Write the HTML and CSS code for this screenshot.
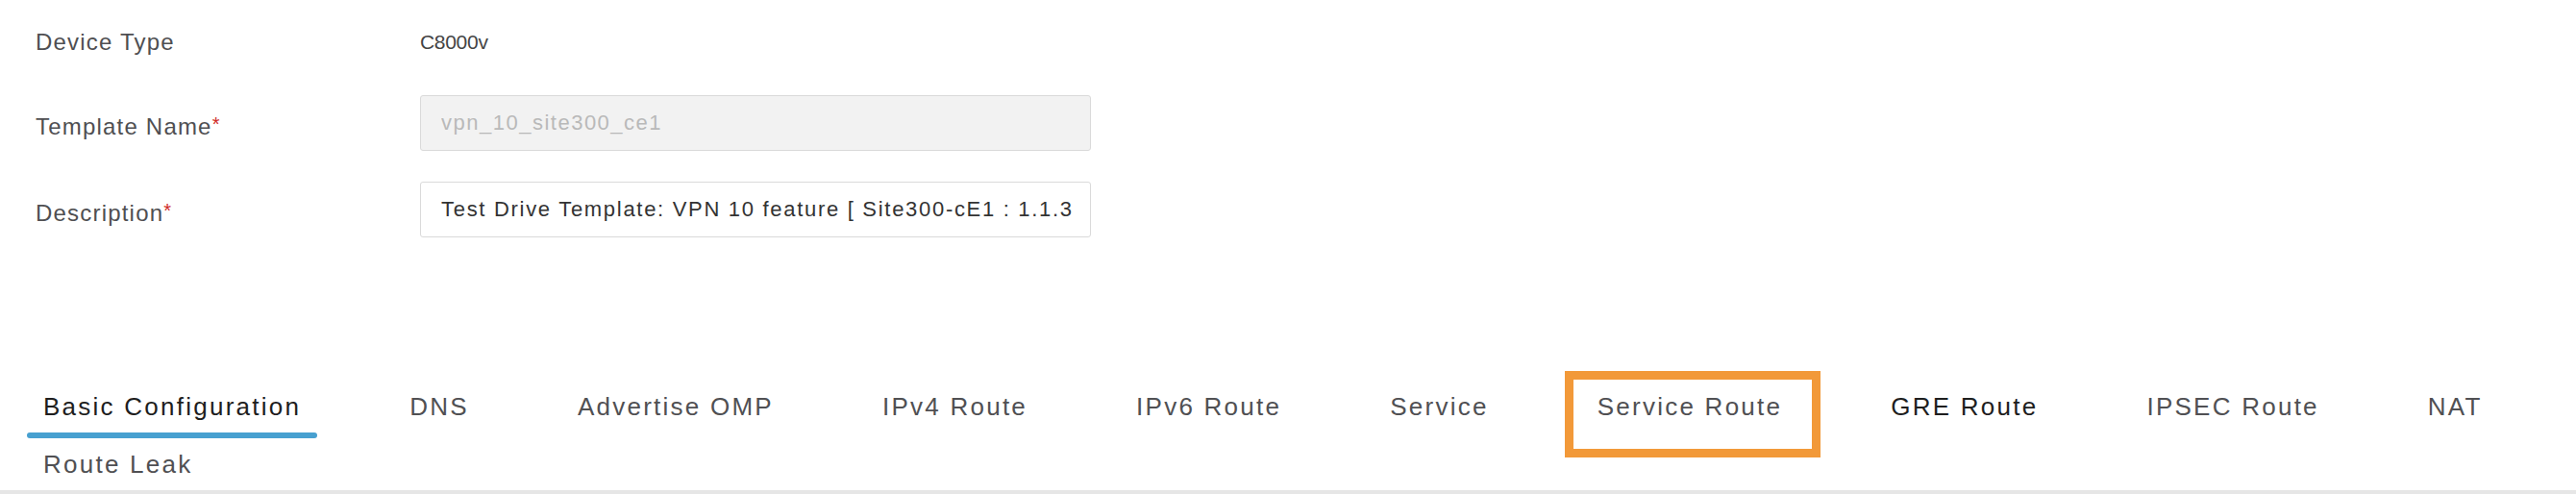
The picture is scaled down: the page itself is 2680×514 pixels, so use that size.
FILE: index.html
```html
<!DOCTYPE html>
<html lang="en">
<head>
<meta charset="utf-8">
<title>Feature Template</title>
<link rel="stylesheet" href="styles.css">
</head>
<body>
<div class="page">
  <div class="form">
    <div class="row row-first">
      <div class="label">Device Type</div>
      <div class="value">C8000v</div>
    </div>
    <div class="row">
      <label class="label label-field" for="tname">Template Name<span class="req">*</span></label>
      <input id="tname" class="field field-disabled" value="vpn_10_site300_ce1" disabled>
    </div>
    <div class="row">
      <label class="label label-field" for="tdesc">Description<span class="req">*</span></label>
      <input id="tdesc" class="field field-desc" value="Test Drive Template: VPN 10 feature [ Site300-cE1 : 1.1.3">
    </div>
  </div>
  <nav class="tabs">
    <div class="tab tab-active">Basic Configuration</div>
    <div class="tab">DNS</div>
    <div class="tab">Advertise OMP</div>
    <div class="tab">IPv4 Route</div>
    <div class="tab">IPv6 Route</div>
    <div class="tab">Service</div>
    <div class="tab tab-marked">Service Route</div>
    <div class="tab tab-dark">GRE Route</div>
    <div class="tab">IPSEC Route</div>
    <div class="tab">NAT</div>
    <div class="tab">Route Leak</div>
  </nav>
</div>
</body>
</html>
```
FILE: styles.css
```css
html, body {
  margin: 0;
  padding: 0;
  background: #ffffff;
}

body {
  font-family: "Liberation Sans", Arial, sans-serif;
  color: #4a4a4a;
  width: 2680px;
  height: 514px;
  overflow: hidden;
}

.form {
  display: flex;
  flex-direction: column;
  gap: 32px;
  padding: 19px 0 0 37px;
}

.row {
  display: grid;
  grid-template-columns: 400px 698px;
  align-items: center;
  height: 58px;
}

.row-first {
  height: 48px;
}

.label {
  font-size: 24px;
  letter-spacing: 1.2px;
  color: #4f4f52;
  padding-top: 2px;
}

.label-field {
  padding-top: 7px;
}

.value {
  font-size: 21px;
  letter-spacing: -0.3px;
  color: #444444;
  padding-top: 2px;
}

.req {
  color: #cf2a27;
  font-size: 20px;
  position: relative;
  top: -4px;
  letter-spacing: 0;
}

.field {
  box-sizing: border-box;
  width: 698px;
  height: 58px;
  margin: 0;
  padding: 0 21px;
  border: 1px solid #dadada;
  border-radius: 3px;
  background: #ffffff;
  font-family: "Liberation Sans", Arial, sans-serif;
  font-size: 22px;
  letter-spacing: 1.5px;
  color: #3c3c3c;
  outline: none;
}

.field-desc {
  padding-right: 8px;
  letter-spacing: 1.7px;
  color: #333333;
}

.field-disabled {
  background: #f2f2f2;
  color: #b9b9b9;
  -webkit-text-fill-color: #b9b9b9;
  opacity: 1;
}

.tabs {
  display: flex;
  flex-wrap: wrap;
  column-gap: 79px;
  row-gap: 6px;
  margin-top: 149px;
  padding-left: 28px;
  border-bottom: 4px solid #e6e6e6;
}

.tab {
  position: relative;
  padding: 13px 17px;
  font-size: 26px;
  line-height: 28px;
  letter-spacing: 2.25px;
  color: #505053;
  white-space: nowrap;
}

.tab-active {
  color: #1e1e1e;
}

.tab-active::after {
  content: "";
  position: absolute;
  left: 0;
  right: 0;
  bottom: -6px;
  height: 6px;
  border-radius: 3px;
  background: #47a0d0;
}

.tab-dark {
  color: #1e1e1e;
}

.tab-marked::before {
  content: "";
  position: absolute;
  top: -10px;
  bottom: -26px;
  left: -17px;
  right: -23px;
  border: 9px solid #f29939;
}
```
